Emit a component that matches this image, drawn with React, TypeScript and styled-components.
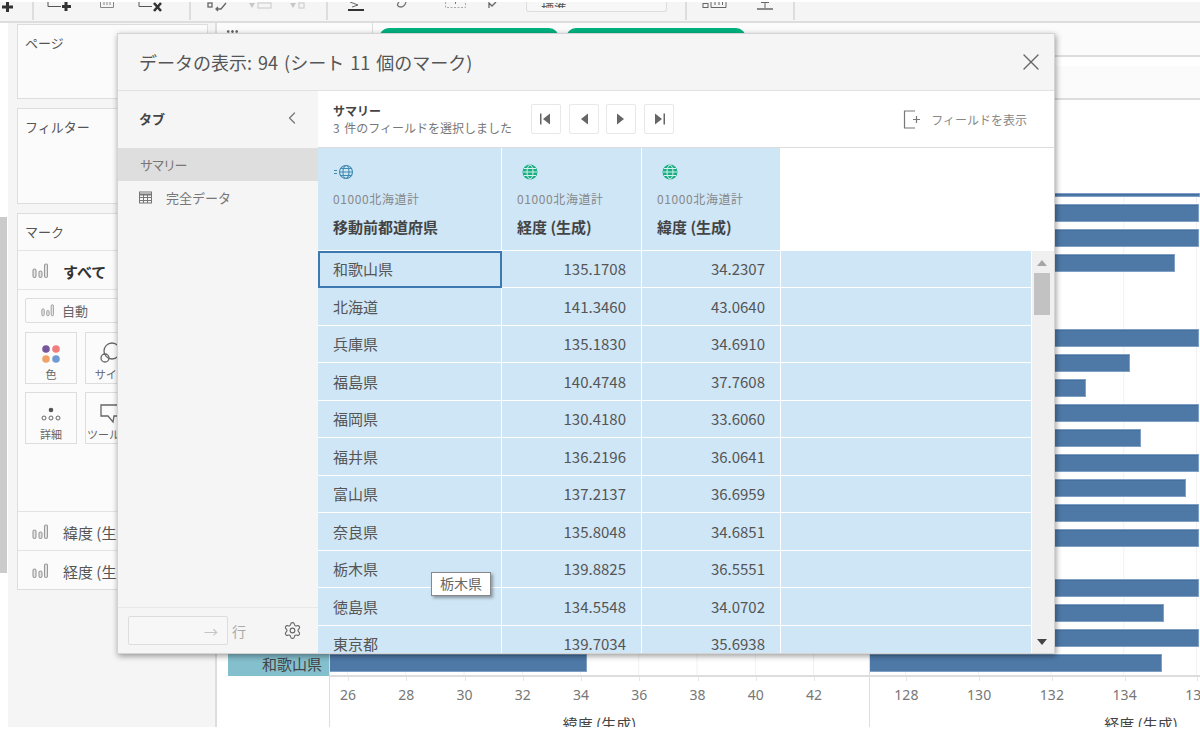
import React from 'react';
import styled, { createGlobalStyle } from 'styled-components';
import { ChevronLeft, Settings, X } from 'lucide-react';

const GlobalStyle = createGlobalStyle`
    html, body {
        margin: 0;
        height: 100%;
        overflow: hidden;
        background: #fff;
    }
    body {
        font-family: 'Noto Sans CJK JP', 'Noto Sans', sans-serif;
        color: #555;
    }
    * {
        box-sizing: border-box;
    }
`;

const Page = styled.div`
    position: relative;
    width: 1200px;
    height: 727px;
    overflow: hidden;
    background: #fff;
    display: flex;
    flex-direction: column;
    padding-top: 2px;
`;

const Toolbar = styled.div`
    display: flex;
    height: 21px;
    flex: 0 0 21px;
    background: #f5f5f5;
    border-bottom: 2px solid #ddd;
    overflow: hidden;
`;

const ToolGroup = styled.div<{ $width?: number }>`
    display: flex;
    align-items: flex-start;
    flex: ${p => (p.$width ? `0 0 ${p.$width}px` : '1 1 auto')};
    height: 18px;
    border-right: ${p => (p.$width ? '2px solid #ddd' : '0')};
`;

const ToolIcon = styled.svg<{ $left: number }>`
    flex: none;
    margin-left: ${p => p.$left}px;
    color: #555;
`;

const ComboBox = styled.div`
    flex: 0 0 141px;
    margin-left: 29px;
    height: 10px;
    border: 1.5px solid #ddd;
    border-top: 0;
    border-radius: 0 0 3px 3px;
    font-size: 13px;
    line-height: 13px;
    padding-left: 14px;
    color: #555;
    background: #f7f7f7;
    span {
        display: block;
        height: 6px;
        overflow: hidden;
    }
`;

const Body = styled.div`
    flex: 1;
    display: grid;
    grid-template-columns: 8px 209px 1fr;
    grid-template-rows: minmax(0, 1fr);
    min-height: 0;
`;

const LeftStrip = styled.div`
    background: #fff;
    padding-top: 194px;
`;

const StripThumb = styled.div`
    width: 7px;
    height: 356px;
    background: #cbcbcb;
`;

const SidePanel = styled.div`
    background: #f5f5f5;
    border-right: 2px solid #ddd;
    padding: 1px 7px 0 9px;
    display: flex;
    flex-direction: column;
    gap: 9px;
`;

const Card = styled.div<{ $height: number }>`
    height: ${p => p.$height}px;
    background: #fbfbfb;
    border: 1.5px solid #ddd;
    display: flex;
    flex-direction: column;
`;

const CardTitle = styled.div`
    font-size: 13px;
    line-height: 18px;
    color: #555;
    padding: 9px 0 0 7px;
    height: 36px;
    flex: none;
`;

const MarkRow = styled.div<{ $bold?: boolean }>`
    display: flex;
    align-items: center;
    gap: 15px;
    height: 39px;
    flex: none;
    border-top: 1.5px solid #e4e4e4;
    padding: 2px 0 0 14px;
    font-size: 15px;
    white-space: nowrap;
    font-weight: ${p => (p.$bold ? 700 : 400)};
    color: ${p => (p.$bold ? '#333' : '#555')};
`;

const MarkBody = styled.div`
    flex: 1;
    border-top: 1.5px solid #e4e4e4;
    padding: 8px 0 0 7px;
`;

const MarkSelect = styled.div`
    display: flex;
    align-items: center;
    gap: 8px;
    height: 25px;
    width: 170px;
    border: 1.5px solid #ddd;
    border-radius: 2px;
    padding-left: 15px;
    font-size: 13px;
    color: #666;
    margin-bottom: 9px;
`;

const MarkGrid = styled.div`
    display: grid;
    grid-template-columns: repeat(3, 52px);
    grid-auto-rows: 52px;
    gap: 8px;
`;

const MarkButton = styled.div<{ $overflowing?: boolean }>`
    border: 1.5px solid #ddd;
    background: #fbfbfb;
    display: flex;
    flex-direction: column;
    align-items: center;
    justify-content: flex-end;
    gap: 3px;
    padding-bottom: 1px;
    font-size: 11px;
    line-height: 15px;
    color: #666;
    white-space: nowrap;
    span {
        align-self: ${p => (p.$overflowing ? 'flex-start' : 'center')};
        padding-left: ${p => (p.$overflowing ? 1 : 0)}px;
    }
`;

const Main = styled.div`
    display: flex;
    flex-direction: column;
    min-width: 0;
`;

const Shelf = styled.div<{ $after: number }>`
    height: 34px;
    flex: none;
    background: #fbfbfb;
    border-bottom: 2px solid #ddd;
    display: flex;
    margin-bottom: ${p => p.$after}px;
`;

const ShelfLabel = styled.div`
    flex: 0 0 156px;
    margin-right: 6px;
    border-right: 1.5px solid #ddd;
    padding: 7px 0 0 9px;
`;

const ShelfDots = styled.div`
    width: 13px;
    height: 3px;
    background: radial-gradient(circle, #666 1.2px, transparent 1.4px) 0 0 / 4.3px 3px repeat-x;
`;

const Pill = styled.div`
    flex: 0 0 180px;
    height: 24px;
    margin: 5px 7px 0 0;
    background: #00b180;
    border-radius: 10px;
`;

const Chart = styled.div`
    flex: 1;
    display: grid;
    grid-template-columns: 11px 101px 540px 1fr;
    grid-template-rows: 85px 482px 1fr;
    min-height: 0;
    overflow: hidden;
`;

const ChartGap = styled.div`
    grid-column: 1 / -1;
`;

const RowHeaderColumn = styled.div`
    grid-column: 2;
    display: flex;
    flex-direction: column;
    justify-content: flex-end;
`;

const RowHeaderCell = styled.div`
    height: 22px;
    margin-bottom: -1px;
    background: #84bfce;
    font-size: 15px;
    line-height: 19px;
    text-align: right;
    padding-right: 7px;
    color: #444;
`;

const Pane = styled.div<{ $step: number; $offset: number }>`
    border-left: 1.5px solid #ddd;
    display: flex;
    flex-direction: column;
    justify-content: flex-end;
    overflow: hidden;
    background-image: linear-gradient(to right, #f1f1f1 1px, transparent 1px);
    background-size: ${p => p.$step}px 100%;
    background-position: ${p => p.$offset}px 0;
`;

const BarRow = styled.div<{ $height?: number }>`
    height: ${p => p.$height ?? 25}px;
    flex: none;
`;

const Bar = styled.div<{ $height?: number }>`
    height: ${p => p.$height ?? 18}px;
    background: #4e79a7;
    border: 1px solid #7f9fc4;
    border-left: 0;
    box-shadow: inset 0 1px 0 #44709f;
`;

const Axis = styled.div`
    border-top: 2px solid #ddd;
    border-left: 1.5px solid #ddd;
    overflow: hidden;
`;

const Ticks = styled.div<{ $shift: number }>`
    display: flex;
    margin-left: ${p => p.$shift}px;
    height: 37px;
`;

const Tick = styled.div<{ $width: number }>`
    flex: 0 0 ${p => p.$width}px;
    position: relative;
    text-align: center;
    padding-top: 8px;
    font-family: 'Noto Sans', sans-serif;
    font-size: 14px;
    line-height: 20px;
    color: #777;
    &::before {
        content: '';
        position: absolute;
        top: 0;
        left: 50%;
        width: 1px;
        height: 4px;
        background: #e6e6e6;
    }
`;

// the second pane runs past the right edge of the window, so its title sits off centre
const AxisTitle = styled.div<{ $pad?: number }>`
    text-align: center;
    font-size: 15px;
    line-height: 18px;
    margin-top: 1px;
    padding-left: ${p => p.$pad ?? 0}px;
    color: #444;
    white-space: nowrap;
`;

const Modal = styled.div`
    position: absolute;
    left: 117px;
    top: 33px;
    width: 938px;
    height: 621px;
    background: #fff;
    border: 1px solid #d4d4d4;
    box-shadow: 1px 2px 6px rgba(0, 0, 0, 0.4);
    display: flex;
    flex-direction: column;
`;

const ModalHead = styled.div`
    flex: 0 0 57px;
    background: #f5f5f5;
    border-bottom: 1.5px solid #e2e2e2;
    display: flex;
    align-items: center;
    justify-content: space-between;
    padding: 0 9px 1px 21px;
    font-size: 18px;
    word-spacing: 2px;
    color: #555;
    svg {
        color: #666;
    }
`;

const ModalBody = styled.div`
    flex: 1;
    display: grid;
    grid-template-columns: 200px 1fr;
    grid-template-rows: minmax(0, 1fr);
    min-height: 0;
`;

const Sidebar = styled.div`
    background: #f5f5f5;
    display: flex;
    flex-direction: column;
    min-height: 0;
`;

const SidebarHead = styled.div`
    flex: 0 0 57px;
    display: flex;
    align-items: center;
    justify-content: space-between;
    padding: 0 16px 3px 21px;
    font-size: 13px;
    font-weight: 700;
    color: #444;
    svg {
        color: #777;
    }
`;

const TabItem = styled.div<{ $active?: boolean }>`
    height: 33px;
    display: flex;
    align-items: center;
    gap: 14px;
    padding-left: ${p => (p.$active ? 22 : 21)}px;
    font-size: 13px;
    letter-spacing: ${p => (p.$active ? '-1.5px' : '0')};
    color: #777;
    background: ${p => (p.$active ? '#dedede' : 'transparent')};
`;

const SidebarFoot = styled.div`
    margin-top: auto;
    flex: 0 0 46px;
    border-top: 1.5px solid #e8e8e8;
    display: flex;
    align-items: center;
    padding: 0 16px 0 10px;
    font-size: 14px;
    color: #aaa;
    svg.gear {
        margin-left: auto;
        color: #666;
    }
`;

const RowInput = styled.div`
    width: 100px;
    height: 29px;
    border: 1.5px solid #ddd;
    border-radius: 2px;
    background: #f7f7f7;
    display: flex;
    align-items: center;
    justify-content: flex-end;
    padding-right: 9px;
    margin-right: 4px;
    color: #c4c4c4;
`;

const Content = styled.div`
    display: flex;
    flex-direction: column;
    min-width: 0;
    min-height: 0;
`;

const ContentBar = styled.div`
    flex: 0 0 57px;
    border-bottom: 1.5px solid #ddd;
    display: flex;
    align-items: center;
    padding: 0 27px 0 15px;
`;

const Summary = styled.div`
    width: 198px;
    padding-top: 1px;
    strong {
        display: block;
        font-size: 12px;
        line-height: 17px;
        color: #444;
        font-weight: 700;
    }
    span {
        display: block;
        font-size: 12px;
        line-height: 18px;
        color: #777;
        white-space: nowrap;
        word-spacing: 2px;
    }
`;

const NavButtons = styled.div`
    display: flex;
    gap: 7.5px;
`;

const NavButton = styled.button`
    width: 30px;
    height: 30px;
    padding: 0;
    display: flex;
    align-items: center;
    justify-content: center;
    background: #fff;
    border: 1.5px solid #e8e8e8;
    border-radius: 2px;
    color: #666;
`;

const ShowFields = styled.div`
    margin-left: auto;
    display: flex;
    align-items: center;
    gap: 10px;
    font-size: 12px;
    color: #888;
`;

const HeadRow = styled.div`
    flex: 0 0 102.5px;
    display: grid;
    grid-template-columns: 184px 140px 139px 1fr;
`;

const HeadCell = styled.div<{ $iconLeft: number }>`
    background: #cfe6f6;
    border-right: 1.5px solid #fff;
    border-bottom: 1.5px solid #fff;
    padding: 16px 0 0 15px;
    svg {
        display: block;
        margin-left: ${p => p.$iconLeft}px;
    }
    small {
        display: block;
        margin-top: 10px;
        font-size: 12px;
        line-height: 18px;
        color: #888;
        letter-spacing: 0.6px;
        white-space: nowrap;
    }
    strong {
        display: block;
        margin-top: 8px;
        font-size: 15px;
        line-height: 22px;
        font-weight: 700;
        color: #444;
        white-space: nowrap;
    }
`;

const TableBody = styled.div`
    flex: 1;
    min-height: 0;
    display: flex;
    overflow: hidden;
`;

const Rows = styled.div`
    flex: 1;
    min-width: 0;
    overflow: hidden;
`;

const DataRow = styled.div`
    height: 37.5px;
    display: grid;
    grid-template-columns: 184px 140px 139px 1fr;
`;

const DataCell = styled.div<{ $num?: boolean; $selected?: boolean }>`
    background: #cfe6f6;
    border-right: ${p => (p.$selected ? '0' : '1.5px solid #fff')};
    border-bottom: 1.5px solid #fff;
    outline: ${p => (p.$selected ? '2px solid #3d78b0' : 'none')};
    outline-offset: -2px;
    display: flex;
    align-items: center;
    justify-content: ${p => (p.$num ? 'flex-end' : 'flex-start')};
    padding: 0 15px;
    font-size: 15px;
    color: #555;
    white-space: nowrap;
`;

const Scrollbar = styled.div`
    flex: 0 0 22px;
    background: #f0f0f0;
    display: flex;
    flex-direction: column;
    align-items: center;
    padding: 9px 2px 8px 0;
    color: #a6a6a6;
`;

const ScrollThumb = styled.div`
    width: 16px;
    height: 42px;
    margin-top: 7px;
    background: #c2c2c2;
`;

const ScrollDown = styled.div`
    margin-top: auto;
    color: #444;
    line-height: 0;
`;

const Tip = styled.div`
    position: absolute;
    left: 431px;
    top: 572px;
    width: 60px;
    height: 24px;
    background: #fff;
    border: 1.5px solid #888;
    box-shadow: 2px 2px 3px rgba(0, 0, 0, 0.35);
    font-size: 14px;
    line-height: 20px;
    text-align: center;
    color: #666;
`;

function BarGlyph({ size = 16 }: { size?: number }) {
    return (
        <svg width={size} height={size} viewBox="0 0 16 16" fill="#e4e4e4" stroke="#999" strokeWidth="1.1" style={{ flex: 'none' }}>
            <rect x="1" y="6" width="3" height="8.5" rx="1.5" />
            <rect x="7" y="8" width="3" height="6.5" rx="1.5" />
            <rect x="12.5" y="1" width="3" height="13.5" rx="1.5" />
        </svg>
    );
}

function Globe({ color, prefix }: { color: string; prefix?: boolean }) {
    if (prefix) {
        return (
            <svg width="22" height="16" viewBox="0 0 22 16" fill="none" stroke={color} strokeWidth="1.1">
                <path d="M1 6.5h3M1 9.5h3" />
                <circle cx="13" cy="8" r="6.5" />
                <ellipse cx="13" cy="8" rx="3" ry="6.5" />
                <path d="M6.5 8h13M7.5 4.5h11M7.5 11.5h11" />
            </svg>
        );
    }
    return (
        <svg width="16" height="16" viewBox="0 0 16 16">
            <circle cx="8" cy="8" r="7.5" fill={color} />
            <g fill="none" stroke="#d8f2ea" strokeWidth="1">
                <ellipse cx="8" cy="8" rx="3" ry="7" />
                <path d="M1 8h14M2 4.5h12M2 11.5h12" />
            </g>
        </svg>
    );
}

function TableGlyph() {
    return (
        <svg width="13" height="13" viewBox="0 0 13 13" fill="none" stroke="#777" strokeWidth="1">
            <rect x="0.5" y="1" width="12" height="11" />
            <path d="M0.5 3.5h12" strokeWidth="2" />
            <path d="M0.5 6.5h12M0.5 9.5h12M4.5 3.5v8.5M8.5 3.5v8.5" />
        </svg>
    );
}

function NavIcon({ dir, edge }: { dir: 'left' | 'right'; edge?: boolean }) {
    return (
        <svg width="14" height="14" viewBox="0 0 14 14" fill="currentColor">
            {dir === 'left' ? <path d="M11 1.5v11L4 7z" /> : <path d="M3 1.5v11L10 7z" />}
            {edge && (dir === 'left' ? <rect x="1" y="1.5" width="1.5" height="11" /> : <rect x="11.5" y="1.5" width="1.5" height="11" />)}
        </svg>
    );
}

const rows = [
    ['和歌山県', '135.1708', '34.2307'],
    ['北海道', '141.3460', '43.0640'],
    ['兵庫県', '135.1830', '34.6910'],
    ['福島県', '140.4748', '37.7608'],
    ['福岡県', '130.4180', '33.6060'],
    ['福井県', '136.2196', '36.0641'],
    ['富山県', '137.2137', '36.6959'],
    ['奈良県', '135.8048', '34.6851'],
    ['栃木県', '139.8825', '36.5551'],
    ['徳島県', '134.5548', '34.0702'],
    ['東京都', '139.7034', '35.6938'],
];

// right pane bar widths, 0 = no bar in that row
const lngBars = [329, 329, 305, 0, 0, 329, 260, 216, 329, 271, 329, 316, 329, 329, 0, 329, 294, 329, 292];

const latTicks = ['26', '28', '30', '32', '34', '36', '38', '40', '42'];
const lngTicks = ['128', '130', '132', '134', '136'];

function App() {
    return (
        <Page>
            <GlobalStyle />
            <Toolbar>
                <ToolGroup $width={34}>
                    <ToolIcon $left={2} width="11" height="10" viewBox="0 0 11 10" fill="#333">
                        <path d="M4 0h3v3.5h4v3H7V10H4V6.500H0v-3h4z" />
                    </ToolIcon>
                </ToolGroup>
                <ToolGroup $width={157}>
                    <ToolIcon $left={13} width="24" height="10" viewBox="0 0 24 10" fill="none" stroke="#555">
                        <path d="M1 0v4.500h13" />
                        <path d="M19 0v9M15 4.500h9" stroke="#333" strokeWidth="3" />
                    </ToolIcon>
                    <ToolIcon $left={29} width="14" height="6" viewBox="0 0 14 6" fill="none" stroke="#888">
                        <path d="M.5 0v5.500h13V0M4 0v3M7 0v3M10 0v3" />
                    </ToolIcon>
                    <ToolIcon $left={24} width="24" height="10" viewBox="0 0 24 10" fill="none" stroke="#555">
                        <path d="M1 0v4.500h13" />
                        <path d="M16 1l7 8M23 1l-7 8" stroke="#333" strokeWidth="2.600" />
                    </ToolIcon>
                </ToolGroup>
                <ToolGroup $width={137}>
                    <ToolIcon $left={16} width="20" height="10" viewBox="0 0 20 10" fill="none" stroke="#666" strokeWidth="1.300">
                        <rect x="1" y="1" width="4" height="4" />
                        <path d="M19 1l-5 6H9M11 5L9 7l2 2" />
                    </ToolIcon>
                    <ToolIcon $left={21} width="24" height="7" viewBox="0 0 24 7" fill="#c8c8c8">
                        <path d="M1 1h6L4 6z" />
                        <rect x="10" y="1" width="13" height="5" fill="none" stroke="#c8c8c8" />
                    </ToolIcon>
                    <ToolIcon $left={17} width="16" height="7" viewBox="0 0 16 7" fill="#c8c8c8">
                        <path d="M1 1h6L4 6z" />
                        <rect x="10" y="1" width="5" height="5" fill="none" stroke="#c8c8c8" />
                    </ToolIcon>
                </ToolGroup>
                <ToolGroup $width={359}>
                    <ToolIcon $left={20} width="16" height="9" viewBox="0 0 16 9" fill="none" stroke="#666">
                        <path d="M2 0l8 3-6 2" />
                        <path d="M0 8h16" stroke="#333" strokeWidth="2" />
                    </ToolIcon>
                    <ToolIcon $left={32} width="12" height="6" viewBox="0 0 12 6" fill="none" stroke="#777" strokeWidth="1.300">
                        <path d="M3 0c-3 3-1 5 2 5s4-2 5-5" />
                    </ToolIcon>
                    <ToolIcon $left={37} width="21" height="6" viewBox="0 0 21 6" fill="none" stroke="#aaa" strokeDasharray="2 1.500">
                        <path d="M.5 0v5.500h20V0" />
                        <path d="M10.500 0v2" stroke="#777" strokeDasharray="none" />
                    </ToolIcon>
                    <ToolIcon $left={22} width="9" height="6" viewBox="0 0 9 6" fill="none" stroke="#666" strokeWidth="1.300">
                        <path d="M1 6V1l3 3 4-4" />
                    </ToolIcon>
                    <ComboBox>
                        <span>標準</span>
                    </ComboBox>
                </ToolGroup>
                <ToolGroup $width={108}>
                    <ToolIcon $left={15} width="25" height="7" viewBox="0 0 25 7" fill="none" stroke="#666">
                        <rect x="1" y="1.500" width="5" height="4" />
                        <path d="M9 0v5.500h15V0M13 0v3M17 0v3M20.500 0v3" />
                    </ToolIcon>
                    <ToolIcon $left={29} width="18" height="8" viewBox="0 0 18 8" fill="none" stroke="#666">
                        <path d="M9 0v6M5 0.500h8" />
                        <path d="M1 7h16" strokeWidth="1.500" />
                    </ToolIcon>
                </ToolGroup>
                <ToolGroup />
            </Toolbar>
            <Body>
                <LeftStrip>
                    <StripThumb />
                </LeftStrip>
                <SidePanel>
                    <Card $height={75}>
                        <CardTitle>ページ</CardTitle>
                    </Card>
                    <Card $height={96}>
                        <CardTitle>フィルター</CardTitle>
                    </Card>
                    <Card $height={377}>
                        <CardTitle>マーク</CardTitle>
                        <MarkRow $bold>
                            <BarGlyph />
                            すべて
                        </MarkRow>
                        <MarkBody>
                            <MarkSelect>
                                <BarGlyph size={13} />
                                自動
                            </MarkSelect>
                            <MarkGrid>
                                <MarkButton>
                                    <svg width="20" height="20" viewBox="0 0 20 20">
                                        <circle cx="5" cy="5" r="3.800" fill="#75589b" />
                                        <circle cx="15" cy="5" r="3.800" fill="#f27d7d" />
                                        <circle cx="5" cy="15" r="3.800" fill="#f0a266" />
                                        <circle cx="15" cy="15" r="3.800" fill="#6f9bd2" />
                                    </svg>
                                    <span>色</span>
                                </MarkButton>
                                <MarkButton>
                                    <svg width="24" height="22" viewBox="0 0 24 22" fill="none" stroke="#666" strokeWidth="1.300">
                                        <circle cx="6" cy="16" r="4" />
                                        <circle cx="13" cy="9" r="8" />
                                    </svg>
                                    <span>サイズ</span>
                                </MarkButton>
                                <MarkButton>
                                    <span>ラベル</span>
                                </MarkButton>
                                <MarkButton>
                                    <svg width="20" height="18" viewBox="0 0 20 18" fill="none" stroke="#666">
                                        <circle cx="10" cy="4" r="2.300" fill="#555" stroke="none" />
                                        <circle cx="3" cy="12" r="2" />
                                        <circle cx="10" cy="12" r="2" />
                                        <circle cx="17" cy="12" r="2" />
                                    </svg>
                                    <span>詳細</span>
                                </MarkButton>
                                <MarkButton $overflowing>
                                    <svg width="22" height="20" viewBox="0 0 22 20" fill="none" stroke="#666" strokeWidth="1.300">
                                        <path d="M1 1h20v11h-7l-1 6-5-6H1z" />
                                    </svg>
                                    <span>ツールヒント</span>
                                </MarkButton>
                            </MarkGrid>
                        </MarkBody>
                        <MarkRow>
                            <BarGlyph />
                            緯度 (生成)
                        </MarkRow>
                        <MarkRow>
                            <BarGlyph />
                            経度 (生成)
                        </MarkRow>
                    </Card>
                </SidePanel>
                <Main>
                    <Shelf $after={9}>
                        <ShelfLabel>
                            <ShelfDots />
                        </ShelfLabel>
                        <Pill />
                        <Pill />
                    </Shelf>
                    <Shelf $after={8}>
                        <ShelfLabel />
                    </Shelf>
                    <Chart>
                        <ChartGap />
                        <div />
                        <RowHeaderColumn>
                            <RowHeaderCell>和歌山県</RowHeaderCell>
                        </RowHeaderColumn>
                        <Pane $step={58.25} $offset={17}>
                            <BarRow $height={21}>
                                <Bar style={{ width: 257 }} />
                            </BarRow>
                        </Pane>
                        <Pane $step={72.75} $offset={35}>
                            <BarRow $height={11}>
                                <Bar $height={4} />
                            </BarRow>
                            {lngBars.map((w, i) => (
                                <BarRow key={i} $height={i === lngBars.length - 1 ? 21 : 25}>
                                    {w > 0 && <Bar style={{ width: w }} />}
                                </BarRow>
                            ))}
                        </Pane>
                        <div />
                        <div />
                        <Axis>
                            <Ticks $shift={-11}>
                                {latTicks.map(t => (
                                    <Tick key={t} $width={58.25}>
                                        {t}
                                    </Tick>
                                ))}
                            </Ticks>
                            <AxisTitle>緯度 (生成)</AxisTitle>
                        </Axis>
                        <Axis>
                            <Ticks $shift={0}>
                                {lngTicks.map(t => (
                                    <Tick key={t} $width={72.75}>
                                        {t}
                                    </Tick>
                                ))}
                            </Ticks>
                            <AxisTitle $pad={212}>経度 (生成)</AxisTitle>
                        </Axis>
                    </Chart>
                </Main>
            </Body>

            <Modal>
                <ModalHead>
                    データの表示: 94 (シート 11 個のマーク)
                    <X size={28} strokeWidth={1.2} />
                </ModalHead>
                <ModalBody>
                    <Sidebar>
                        <SidebarHead>
                            タブ
                            <ChevronLeft size={20} strokeWidth={1.5} />
                        </SidebarHead>
                        <TabItem $active>サマリー</TabItem>
                        <TabItem>
                            <TableGlyph />
                            完全データ
                        </TabItem>
                        <SidebarFoot>
                            <RowInput>→</RowInput>
                            行
                            <Settings className="gear" size={19} strokeWidth={1.4} />
                        </SidebarFoot>
                    </Sidebar>
                    <Content>
                        <ContentBar>
                            <Summary>
                                <strong>サマリー</strong>
                                <span>3 件のフィールドを選択しました</span>
                            </Summary>
                            <NavButtons>
                                <NavButton>
                                    <NavIcon dir="left" edge />
                                </NavButton>
                                <NavButton>
                                    <NavIcon dir="left" />
                                </NavButton>
                                <NavButton>
                                    <NavIcon dir="right" />
                                </NavButton>
                                <NavButton>
                                    <NavIcon dir="right" edge />
                                </NavButton>
                            </NavButtons>
                            <ShowFields>
                                <svg width="18" height="19" viewBox="0 0 18 19" fill="none" stroke="#777" strokeWidth="1.200">
                                    <path d="M12 1H1.500v17H12M10 9.500h7M13.500 6v7" />
                                </svg>
                                フィールドを表示
                            </ShowFields>
                        </ContentBar>
                        <HeadRow>
                            <HeadCell $iconLeft={0}>
                                <Globe color="#3f8ab0" prefix />
                                <small>01000北海道計</small>
                                <strong>移動前都道府県</strong>
                            </HeadCell>
                            <HeadCell $iconLeft={5}>
                                <Globe color="#18ad84" />
                                <small>01000北海道計</small>
                                <strong>経度 (生成)</strong>
                            </HeadCell>
                            <HeadCell $iconLeft={5}>
                                <Globe color="#18ad84" />
                                <small>01000北海道計</small>
                                <strong>緯度 (生成)</strong>
                            </HeadCell>
                        </HeadRow>
                        <TableBody>
                            <Rows>
                                {rows.map((r, i) => (
                                    <DataRow key={r[0]}>
                                        <DataCell $selected={i === 0}>{r[0]}</DataCell>
                                        <DataCell $num>{r[1]}</DataCell>
                                        <DataCell $num>{r[2]}</DataCell>
                                        <DataCell />
                                    </DataRow>
                                ))}
                            </Rows>
                            <Scrollbar>
                                <svg width="10" height="6" viewBox="0 0 10 6" fill="currentColor">
                                    <path d="M0 6l5-6 5 6z" />
                                </svg>
                                <ScrollThumb />
                                <ScrollDown>
                                    <svg width="10" height="6" viewBox="0 0 10 6" fill="currentColor">
                                        <path d="M0 0l5 6 5-6z" />
                                    </svg>
                                </ScrollDown>
                            </Scrollbar>
                        </TableBody>
                    </Content>
                </ModalBody>
            </Modal>
            <Tip>栃木県</Tip>
        </Page>
    );
}

export default App;
